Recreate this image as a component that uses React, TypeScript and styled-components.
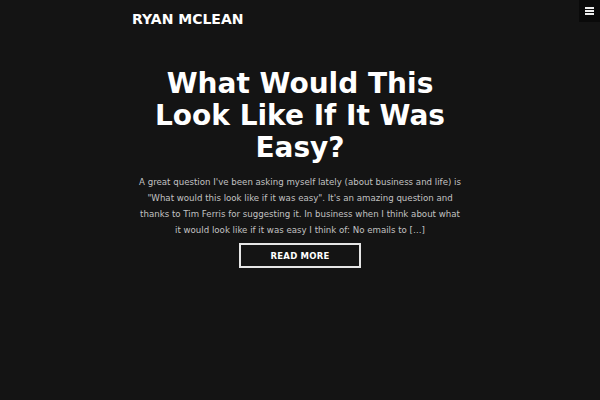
import styled, { createGlobalStyle } from 'styled-components';

const GlobalStyle = createGlobalStyle`
    html, body {
        margin: 0;
        padding: 0;
        background: #141414;
    }
    body {
        font-family: "DejaVu Sans", sans-serif;
        color: #fff;
    }
`;

const Page = styled.div`
    position: relative;
    width: 600px;
    height: 400px;
    background: #141414;
    overflow: hidden;
`;

const Header = styled.header`
    padding: 11px 0 0 132px;
    height: 30px;
    box-sizing: border-box;
`;

const SiteTitle = styled.div`
    font-size: 14px;
    font-weight: bold;
    color: #fff;
`;

const MenuToggle = styled.button`
    position: absolute;
    top: 0;
    right: 0;
    width: 21px;
    height: 22px;
    padding: 0;
    border: none;
    background: #0a0a0a;
    display: flex;
    flex-direction: column;
    align-items: center;
    justify-content: center;
    gap: 1px;
`;

const MenuBar = styled.span`
    display: block;
    width: 9px;
    height: 2px;
    background: #eee;
`;

const Post = styled.article`
    display: flex;
    flex-direction: column;
    align-items: center;
    padding-top: 38px;
`;

const PostTitle = styled.h1`
    margin: 0;
    width: 300px;
    font-size: 28px;
    line-height: 32px;
    font-weight: bold;
    text-align: center;
    color: #fff;
`;

const Excerpt = styled.p`
    margin: 10px 0 0;
    width: 326px;
    font-size: 8.65px;
    line-height: 16px;
    color: #c2c2c2;
    text-align: center;
`;

const ReadMore = styled.a`
    margin-top: 5px;
    display: flex;
    align-items: center;
    justify-content: center;
    width: 122px;
    height: 25px;
    box-sizing: border-box;
    border: 2px solid #e6e6e6;
    font-size: 8.5px;
    font-weight: bold;
    letter-spacing: 0.2px;
    color: #fff;
    text-decoration: none;
`;

export default function App() {
    return (
        <Page>
            <GlobalStyle />
            <Header>
                <SiteTitle>RYAN MCLEAN</SiteTitle>
            </Header>
            <MenuToggle aria-label="Menu">
                <MenuBar />
                <MenuBar />
                <MenuBar />
            </MenuToggle>
            <Post>
                <PostTitle>What Would This Look Like If It Was Easy?</PostTitle>
                <Excerpt>
                    A great question I've been asking myself lately (about business and life) is
                    "What would this look like if it was easy". It's an amazing question and
                    thanks to Tim Ferris for suggesting it. In business when I think about what
                    it would look like if it was easy I think of: No emails to […]
                </Excerpt>
                <ReadMore href="#">READ MORE</ReadMore>
            </Post>
        </Page>
    );
}
